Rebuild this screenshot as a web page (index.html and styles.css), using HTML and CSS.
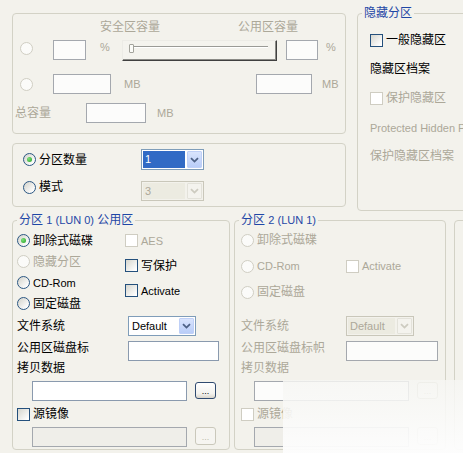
FILE: index.html
```html
<!DOCTYPE html>
<html lang="zh-CN">
<head>
<meta charset="utf-8">
<title>分区设置</title>
<link rel="stylesheet" href="styles.css">
</head>
<body>
<div class="page">
  <div class="top">
    <div class="leftcol">
      <div class="gbox ga">
        <div class="row lab-row">
          <span class="dis lab-safe">安全区容量</span>
          <span class="dis lab-pub">公用区容量</span>
        </div>
        <div class="row ga-r2">
          <span class="radio off ga-radio"></span>
          <span class="tb dtb tb-p1"></span>
          <span class="en dis u-p1">%</span>
          <div class="slider"><div class="track"></div><div class="thumb"></div></div>
          <span class="tb dtb tb-p2"></span>
          <span class="en dis u-p2">%</span>
        </div>
        <div class="row ga-r3">
          <span class="radio off ga-radio"></span>
          <span class="tb dtb tb-m1"></span>
          <span class="en dis u-m1">MB</span>
          <span class="tb dtb tb-m2"></span>
          <span class="en dis u-m2">MB</span>
        </div>
        <div class="row ga-r4">
          <span class="dis lab-total">总容量</span>
          <span class="tb dtb tb-tot"></span>
          <span class="en dis u-tot">MB</span>
        </div>
      </div>
      <div class="gbox gb">
        <div class="row gb-r1">
          <div class="opt gb-opt"><span class="radio on"></span><span class="olab">分区数量</span></div>
          <div class="combo combo-n"><span class="cval sel en">1</span><span class="cbtn"><svg width="9" height="6" viewBox="0 0 9 6"><path d="M1 1.2 L4.5 4.6 L8 1.2" fill="none" stroke="#4d6185" stroke-width="1.8"/></svg></span></div>
        </div>
        <div class="row gb-r2">
          <div class="opt gb-opt"><span class="radio"></span><span class="olab">模式</span></div>
          <div class="combo combo-n cdis"><span class="cval en">3</span><span class="cbtn"><svg width="9" height="6" viewBox="0 0 9 6"><path d="M1 1.2 L4.5 4.6 L8 1.2" fill="none" stroke="#cdcbc0" stroke-width="1.8"/></svg></span></div>
        </div>
      </div>
    </div>
    <div class="gbox ghid">
      <span class="gtitle">隐藏分区</span>
      <div class="hrow h1"><span class="chk"></span><span class="olab">一般隐藏区</span></div>
      <div class="hrow h2">隐藏区档案</div>
      <div class="hrow h3 dis"><span class="chk off"></span><span class="olab">保护隐藏区</span></div>
      <div class="hrow h4 dis en">Protected Hidden Partition</div>
      <div class="hrow h5 dis">保护隐藏区档案</div>
    </div>
  </div>

  <div class="bottom">
    <div class="gbox g1">
      <span class="gtitle">分区 <span class="en">1 (LUN 0)</span> 公用区</span>
      <div class="opts">
        <div class="ocol ocol-l">
          <div class="opt orow"><span class="radio on"></span><span class="olab">卸除式磁碟</span></div>
          <div class="opt orow dis"><span class="radio off"></span><span class="olab">隐藏分区</span></div>
          <div class="opt orow"><span class="radio"></span><span class="olab en">CD-Rom</span></div>
          <div class="opt orow"><span class="radio"></span><span class="olab">固定磁盘</span></div>
        </div>
        <div class="ocol ocol-r">
          <div class="opt crow dis"><span class="chk off"></span><span class="olab en">AES</span></div>
          <div class="opt crow"><span class="chk"></span><span class="olab">写保护</span></div>
          <div class="opt crow"><span class="chk"></span><span class="olab en">Activate</span></div>
        </div>
      </div>
      <div class="row f-fs">
        <span class="flab">文件系统</span>
        <div class="combo combo-fs"><span class="cval en">Default</span><span class="cbtn"><svg width="9" height="6" viewBox="0 0 9 6"><path d="M1 1.2 L4.5 4.6 L8 1.2" fill="none" stroke="#4d6185" stroke-width="1.8"/></svg></span></div>
      </div>
      <div class="row f-lbl">
        <span class="flab">公用区磁盘标</span>
        <span class="tb tb-lbl"></span>
      </div>
      <div class="f-copy-l">拷贝数据</div>
      <div class="row f-copy">
        <span class="tb tb-path"></span>
        <span class="btn btn-h17">...</span>
      </div>
      <div class="row f-mirror"><span class="chk"></span><span class="olab">源镜像</span></div>
      <div class="row f-copy">
        <span class="tb gray tb-path"></span>
        <span class="btn off btn-h18">...</span>
      </div>
    </div>

    <div class="gbox g2">
      <span class="gtitle">分区 <span class="en">2 (LUN 1)</span></span>
      <div class="ocol">
        <div class="opt orow dis"><span class="radio off"></span><span class="olab">卸除式磁碟</span></div>
        <div class="row orow dis"><div class="opt wopt"><span class="radio off"></span><span class="olab en">CD-Rom</span></div><span class="chk off"></span><span class="olab en">Activate</span></div>
        <div class="opt orow dis"><span class="radio off"></span><span class="olab">固定磁盘</span></div>
      </div>
      <div class="row f-fs dis">
        <span class="flab">文件系统</span>
        <div class="combo combo-fs cdis"><span class="cval en">Default</span><span class="cbtn"><svg width="9" height="6" viewBox="0 0 9 6"><path d="M1 1.2 L4.5 4.6 L8 1.2" fill="none" stroke="#cdcbc0" stroke-width="1.8"/></svg></span></div>
      </div>
      <div class="row f-lbl dis">
        <span class="flab">公用区磁盘标帜</span>
        <span class="tb dtb tb-lbl2"></span>
      </div>
      <div class="f-copy-l dis">拷贝数据</div>
      <div class="row f-copy">
        <span class="tb dtb tb-path"></span>
        <span class="btn off btn-h17">...</span>
      </div>
      <div class="row f-mirror dis"><span class="chk off"></span><span class="olab">源镜像</span></div>
      <div class="row f-copy">
        <span class="tb gray tb-path"></span>
        <span class="btn off btn-h18">...</span>
      </div>
    </div>

    <div class="gbox g3"></div>
  </div>
</div>
<div class="smudge"></div>
</body>
</html>
```

FILE: styles.css
```css
* { box-sizing: border-box; }
html, body { margin: 0; padding: 0; }
body {
  width: 463px;
  height: 453px;
  overflow: hidden;
  position: relative;
  background: #f3f2ec;
  color: #000;
  font-family: "Liberation Sans", "Noto Sans CJK SC", sans-serif;
  font-size: 12px;
  line-height: 14px;
}
.page { width: 520px; padding: 13px 0 0 12px; }
.top, .bottom { display: flex; align-items: flex-start; }
.bottom { margin-top: 9px; }
.leftcol { flex: none; width: 334px; }

.gbox { flex: none; border: 1px solid #d3d2c6; border-radius: 4px; }
.ga { height: 121px; }
.gb { height: 64px; margin-top: 9px; }
.ghid { width: 130px; height: 198px; margin-left: 11px; }
.g1 { width: 218px; height: 230px; }
.g2 { width: 212px; height: 230px; margin-left: 4px; }
.g3 { width: 60px; height: 230px; margin-left: 8px; }

.gtitle {
  display: block;
  width: max-content;
  height: 14px;
  margin: -8px 0 0 4px;
  padding: 0 2px;
  background: #f3f2ec;
  color: #1f47a6;
  white-space: nowrap;
}
.en { font-size: 11px; }
.dis { color: #aca899; }
.row { display: flex; align-items: center; white-space: nowrap; }
.opt { display: flex; align-items: center; white-space: nowrap; }
.olab { margin-left: 3px; }

/* controls */
.radio {
  flex: none;
  position: relative;
  width: 13px;
  height: 13px;
  border-radius: 50%;
  border: 1px solid #2b5783;
  background: linear-gradient(135deg, #d2d2ca 0%, #fff 85%);
}
.radio.off { border-color: #d0cec3; background: #fbfbf9; }
.radio.on::after {
  content: "";
  position: absolute;
  left: 3px;
  top: 3px;
  width: 5px;
  height: 5px;
  border-radius: 50%;
  background: radial-gradient(circle at 35% 35%, #7ee07a, #22a224);
}
.chk {
  flex: none;
  width: 13px;
  height: 13px;
  border: 1px solid #24507c;
  background: linear-gradient(135deg, #d6d6ce 0%, #fff 90%);
}
.chk.off { border-color: #cfcdc2; background: #fff; }
.tb {
  flex: none;
  height: 20px;
  border: 1px solid #8a9aae;
  background: #fff;
}
.tb.dtb { border-color: #a4a8ae; background: #fcfcfb; }
.tb.gray { border-color: #a4a8ae; background: #efeee9; }

.combo {
  flex: none;
  display: flex;
  border: 1px solid #7f9db9;
  background: #fff;
  padding: 1px;
}
.cval { flex: 1; padding-left: 2px; margin-right: 2px; line-height: 17px; }
.cval.sel { background: #316ac5; color: #fff; }
.cbtn {
  flex: none;
  width: 15px;
  border: 1px solid #bfd0f7;
  border-radius: 1px;
  background: linear-gradient(#d9e4fd, #b9cdf8);
  display: flex;
  align-items: center;
  justify-content: center;
}
.combo.cdis { border-color: #c9c7ba; background: #f3f2ec; }
.combo.cdis .cval { background: #ecebe1; color: #aca899; }
.combo.cdis .cbtn { border-color: #e3e2da; background: #f4f3ee; }

.btn {
  flex: none;
  width: 21px;
  margin-left: 8px;
  border: 1px solid #2f4a70;
  border-radius: 3px;
  background: linear-gradient(#fff, #f3f2ee 70%, #d9d5cb);
  display: flex;
  justify-content: center;
  align-items: flex-end;
  font-size: 9px;
  line-height: 9px;
  padding-bottom: 2px;
}
.btn.off { border-color: #cac8bb; color: #bcb9ab; background: #f6f5f1; }
.btn-h17 { height: 17px; margin-top: 1px; }
.btn-h18 { height: 18px; }

.slider {
  flex: none;
  position: relative;
  width: 155px;
  height: 21px;
  margin-left: 12px;
  padding: 5px 8px 0 8px;
  border: 1px solid;
  border-color: #ecebe6 #404040 #404040 #ecebe6;
  box-shadow: inset -1px -1px #8a8a86;
  background: #f4f3ee;
}
.track { height: 2px; border-top: 1px solid #9a9a96; border-bottom: 1px solid #fff; }
.thumb {
  position: absolute;
  left: 6px;
  top: 3px;
  width: 5px;
  height: 9px;
  border: 1px solid #a3a39c;
  border-radius: 1px;
  background: #fbfbf8;
}

/* group A */
.lab-row { height: 14px; margin-top: 6px; }
.lab-safe { margin-left: 87px; width: 60px; }
.lab-pub { margin-left: 78px; }
.ga-r2 { height: 21px; margin-top: 6px; align-items: flex-start; }
.ga-r2 .ga-radio { margin-top: 2px; }
.ga-radio { margin-left: 7px; }
.tb-p1 { margin-left: 20px; width: 33px; }
.u-p1 { margin-left: 14px; width: 10px; }
.tb-p2 { margin-left: 9px; width: 32px; }
.u-p2 { margin-left: 8px; }
.ga-r3 { height: 20px; margin-top: 13px; }
.tb-m1 { margin-left: 20px; width: 58px; }
.u-m1 { margin-left: 13px; width: 17px; }
.tb-m2 { margin-left: 115px; width: 56px; }
.u-m2 { margin-left: 10px; }
.ga-r4 { height: 20px; margin-top: 9px; }
.lab-total { margin-left: 2px; width: 36px; }
.tb-tot { margin-left: 35px; width: 60px; }
.u-tot { margin-left: 11px; }

/* group B */
.gb-r1 { height: 21px; margin-top: 5px; }
.gb-r2 { height: 21px; margin-top: 10px; align-items: flex-start; }
.gb-opt { margin-left: 10px; width: 118px; }
.combo-n { width: 63px; height: 21px; }
.gb-r2 .combo-n { height: 20px; margin-top: 1px; }
.gb-r2 .cval { line-height: 16px; }

/* hidden group */
.hrow { display: flex; align-items: center; height: 14px; padding-left: 12px; white-space: nowrap; }
.h1 { margin-top: 13px; }
.h2 { margin-top: 15px; }
.h3 { margin-top: 15px; }
.h4 { margin-top: 16px; }
.h5 { margin-top: 14px; }

/* partition groups */
.opts { display: flex; align-items: flex-start; }
.ocol-l { width: 112px; padding-left: 4px; margin-top: 3px; }
.g1 .orow { height: 21px; }
.ocol-r { margin-top: 1px; }
.crow { height: 25px; }
.g2 .ocol { padding-left: 6px; }
.g2 .orow { height: 26px; }
.wopt { width: 105px; }

.f-fs { height: 20px; }
.g1 .f-fs { margin-top: 2px; }
.g2 .f-fs { margin-top: 11px; }
.flab { flex: none; }
.g1 .flab { margin-left: 4px; width: 111px; }
.g2 .flab { margin-left: 6px; width: 105px; }
.combo-fs { width: 68px; height: 20px; }
.combo-fs .cval { line-height: 16px; }
.f-lbl { height: 20px; margin-top: 5px; align-items: flex-start; }
.tb-lbl { width: 91px; }
.tb-lbl2 { width: 92px; }
.f-copy-l { height: 14px; }
.g1 .f-copy-l { margin-left: 4px; }
.g2 .f-copy-l { margin-left: 6px; }
.f-copy { height: 20px; margin-top: 6px; align-items: flex-start; }
.tb-path { margin-left: 19px; width: 155px; }
.f-mirror { height: 14px; margin-top: 6px; }
.g1 .f-mirror .chk { margin-left: 4px; }
.g2 .f-mirror .chk { margin-left: 6px; }

.smudge {
  position: absolute;
  left: 283px;
  top: 380px;
  width: 180px;
  height: 73px;
  background: linear-gradient(to bottom, rgba(246, 246, 243, 0.82), rgba(253, 253, 253, 0.97));
}
```
